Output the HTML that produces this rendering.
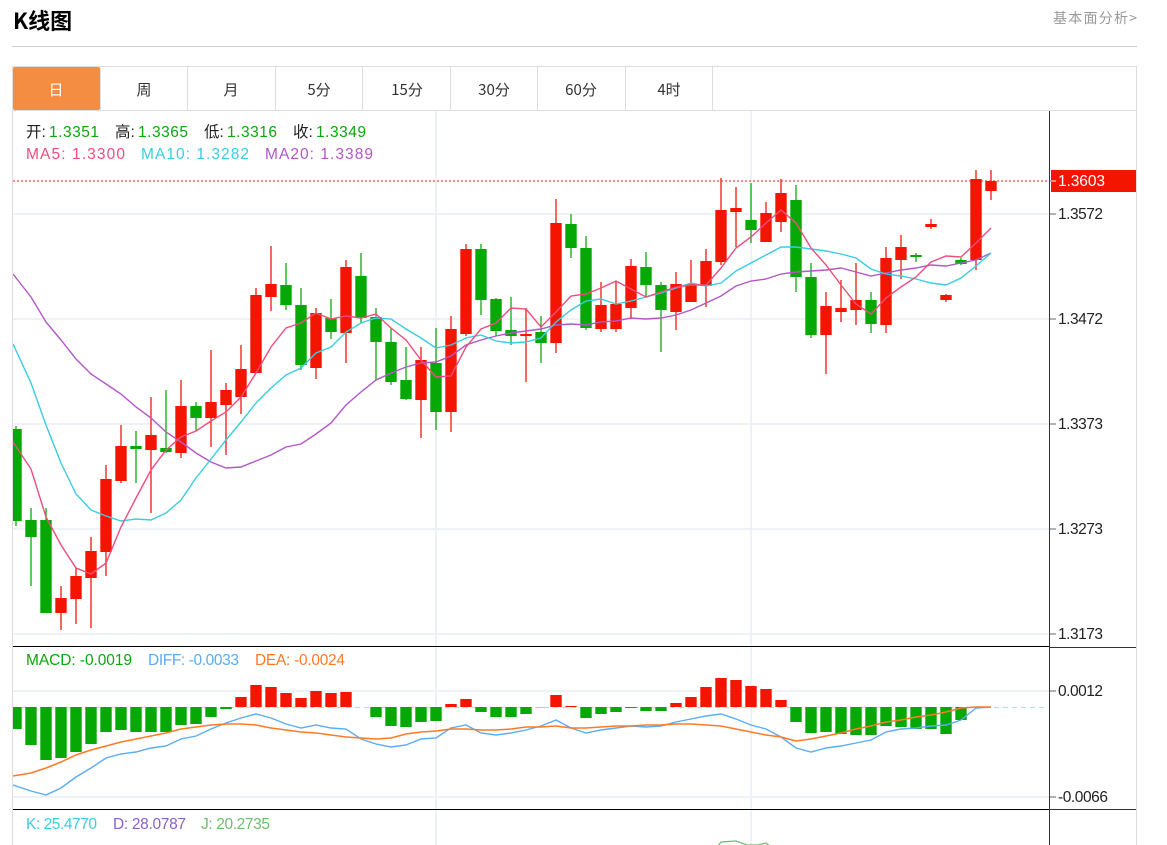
<!DOCTYPE html>
<html lang="zh"><head><meta charset="utf-8"><title>K线图</title>
<style>
html,body{margin:0;padding:0;background:#fff;overflow:hidden}
svg{display:block}
text{font-family:"Liberation Sans","Noto Sans CJK SC",sans-serif;font-size:15.5px;white-space:pre}
.cjk{font-family:"Noto Sans CJK SC",sans-serif}
.g{fill:#0aa80a}.k{fill:#222}
.p{fill:#ee4d7e}.c{fill:#39cde0}.m{fill:#b257c7}
.ax{fill:#222}
.tab{font-family:"Noto Sans CJK SC",sans-serif;font-size:15px;fill:#333;text-anchor:middle}
</style></head><body>
<svg width="1167" height="845" viewBox="0 0 1167 845" xmlns="http://www.w3.org/2000/svg">
<defs><clipPath id="cp"><rect x="13" y="111" width="1036" height="734"/></clipPath></defs>
<rect width="1167" height="845" fill="#fff"/>
<text x="13" y="29" class="cjk" style="font-size:22px;font-weight:700" fill="#000">K线图</text>
<text x="1053" y="23" class="cjk" style="font-size:14px" fill="#999" textLength="84">基本面分析&gt;</text>
<path d="M12 46.5H1137" stroke="#ccc"/>
<path d="M12.5 66V845M1136.5 66V845M12 66.5H1137M12 110.5H1137" stroke="#ddd" fill="none"/>
<path d="M100.5 67V110M187.5 67V110M275.5 67V110M362.5 67V110M450.5 67V110M537.5 67V110M625.5 67V110M712.5 67V110" stroke="#ddd"/>
<rect x="13" y="67" width="87" height="43" rx="2" fill="#f48c42"/>
<text x="56" y="95" class="tab" style="fill:#fff">日</text>
<text x="144" y="95" class="tab">周</text>
<text x="231" y="95" class="tab">月</text>
<text x="319" y="95" class="tab">5分</text>
<text x="407" y="95" class="tab">15分</text>
<text x="494" y="95" class="tab">30分</text>
<text x="581" y="95" class="tab">60分</text>
<text x="669" y="95" class="tab">4时</text>

<!-- grid -->
<g stroke="#e9eef3" stroke-width="1.5" fill="none">
<path d="M13 214H1049M13 319H1049M13 424H1049M13 529H1049M13 634H1049M13 691H1049M13 797H1049"/>
<path d="M436 111V845M751 111V845"/>
</g>
<path d="M13 181H1047" stroke="#f44" stroke-width="1.2" stroke-dasharray="2 2"/>
<path d="M13 707.5H1045" stroke="#b5dff5" stroke-width="1.3" stroke-dasharray="5 4"/>

<g clip-path="url(#cp)" fill="none">
<!-- wicks -->
<path stroke="#1fb01f" stroke-width="1.4" d="M16 426V526M31 508V586M46 508V613M136 431V483M166 390V453M196 402V431M286 263V310M301 288V370M331 299V339M361 253V323M376 308V380M391 328V385M406 347V400M436 328V430M481 244V315M496 298V336M511 297V345M541 316V363M571 214V258M586 236V330M646 252V297M661 282V352M751 183V243M796 185V292M811 263V338M871 292V333M916 253V262M961 258V265"/>
<path stroke="#f6291a" stroke-width="1.4" d="M61 586V630M76 568V624M91 537V628M106 465V576M121 425V483M151 397V513M181 380V458M211 350V447M226 383V455M241 345V414M256 288V373M271 246V311M316 308V379M346 260V363M421 347V438M451 316V432M466 244V336M526 308V382M556 199V353M601 282V332M616 281V332M631 259V319M676 272V330M691 260V302M706 249V307M721 178V265M736 187V247M766 202V242M781 179V232M826 292V374M841 280V322M856 263V325M886 247V333M901 235V279M931 219V229M946 294V302M976 170V270M991 170V200"/>
<!-- bodies -->
<path stroke="#06a806" stroke-width="11.4" d="M16 429V521M31 520V537M46 520V613M136 446V449M166 448V452M196 406V418M286 285V305M301 305V365M331 318V332M361 276V318M376 317V342M391 342V382M406 380V399M436 363V412M481 249V300M496 299V331M511 330V336M541 332V343M571 224V248M586 248V328M646 267V285M661 285V310M751 220V230M796 200V277M811 277V335M871 300V324M916 255V257M961 260V264"/>
<path stroke="#f41500" stroke-width="11.4" d="M61 598V613M76 576V599M91 551V578M106 479V552M121 446V481M151 435V450M181 406V453M211 402V418M226 390V405M241 369V397M256 295V373M271 284V297M316 313V368M346 267V333M421 360V400M451 329V412M466 249V334M526 334V336M556 223V343M601 305V329M616 304V329M631 266V308M676 284V312M691 284V302M706 261V286M721 210V262M736 208V212M766 213V242M781 193V222M826 306V335M841 308V312M856 300V310M886 258V325M901 247V260M931 224V227M946 295V300M976 179V260M991 181V191"/>
<!-- MA lines -->
<polyline stroke="#b257c7" stroke-width="1.4" points="13,274 31,297 46,322 61,340 76,359 91,374 106,384 121,394 136,407 151,418 166,432 181,442 196,453 211,462 226,468 241,467 256,461 271,455 286,447 301,444 316,434 331,423 346,405 361,392 376,380 391,373 406,367 421,363 436,362 451,356 466,345 481,340 496,336 511,333 526,331 541,329 556,325 571,324 586,325 601,322 616,321 631,318 646,319 661,318 676,315 691,310 706,303 721,296 736,286 751,281 766,279 781,274 796,272 811,271 826,270 841,268 856,272 871,276 886,273 901,270 916,268 931,265 946,266 961,263 976,260 991,253"/>
<polyline stroke="#39cde0" stroke-width="1.4" points="13,344 31,383 46,425 61,463 76,494 91,510 106,516 121,521 136,519 151,520 166,513 181,500 196,478 211,459 226,440 241,422 256,403 271,388 286,375 301,368 316,353 331,347 346,332 361,323 376,318 391,319 406,329 421,338 436,348 451,345 466,338 481,335 496,341 511,343 526,342 541,338 556,322 571,310 586,301 601,299 616,304 631,301 646,297 661,293 676,288 691,283 706,286 721,283 736,271 751,263 766,255 781,247 796,247 811,249 826,251 841,254 856,258 871,269 886,274 901,276 916,279 931,283 946,285 961,278 976,266 991,253"/>
<polyline stroke="#ee4d7e" stroke-width="1.4" points="13,442 31,469 46,517 61,545 76,568 91,574 106,563 121,527 136,498 151,470 166,450 181,437 196,431 211,421 226,412 241,397 256,373 271,347 286,328 301,323 316,313 331,319 346,316 361,318 376,314 391,328 406,340 421,360 436,377 451,376 466,347 481,329 496,323 511,308 526,309 541,327 556,312 571,296 586,294 601,288 616,281 631,289 646,297 661,292 676,287 691,285 706,285 721,268 736,248 751,237 766,223 781,210 796,223 811,248 826,265 841,285 856,304 871,314 886,298 901,287 916,277 931,262 946,256 961,257 976,243 991,228"/>
<!-- MACD bars -->
<path stroke="#06a806" stroke-width="11.4" d="M16 707V729M31 707V745M46 707V760M61 707V758M76 707V752M91 707V744M106 707V732M121 707V730M136 707V732M151 707V732M166 707V732M181 707V725M196 707V724M211 707V717M226 707V709M376 707V717M391 707V726M406 707V727M421 707V722M436 707V721M481 707V712M496 707V717M511 707V717M526 707V714M586 707V718M601 707V714M616 707V712M631 707V708M646 707V711M661 707V711M796 707V722M811 707V733M826 707V732M841 707V734M856 707V735M871 707V735M886 707V726M901 707V727M916 707V729M931 707V729M946 707V734M961 707V720"/>
<path stroke="#a8dca8" stroke-width="11.4" d="M541 707V708"/>
<path stroke="#f41500" stroke-width="11.4" d="M241 707V697M256 707V685M271 707V687M286 707V693M301 707V698M316 707V691M331 707V693M346 707V692M451 707V704M466 707V699M556 707V695M571 707V706M676 707V703M691 707V697M706 707V687M721 707V678M736 707V680M751 707V686M766 707V689M781 707V700"/>
<!-- DEA / DIFF -->
<polyline stroke="#5aacf5" stroke-width="1.4" points="13,785 31,791 46,795 61,788 76,777 91,768 106,758 121,754 136,752 151,748 166,746 181,739 196,736 211,729 226,723 241,718 256,714 271,718 286,724 301,728 316,725 331,728 346,729 361,739 376,744 391,747 406,745 421,739 436,738 451,728 466,725 481,733 496,735 511,733 526,730 541,726 556,720 571,728 586,733 601,730 616,728 631,726 646,727 661,726 676,722 691,719 706,716 721,714 736,719 751,725 766,729 781,737 796,748 811,752 826,748 841,746 856,743 871,740 886,732 901,729 916,728 931,726 946,725 961,720 976,708 991,707"/>
<polyline stroke="#ff7a26" stroke-width="1.5" points="13,776 31,773 46,768 61,762 76,755 91,750 106,746 121,742 136,739 151,736 166,733 181,729 196,727 211,725 226,724 241,724 256,725 271,728 286,730 301,732 316,733 331,735 346,737 361,738 376,739 391,738 406,734 421,732 436,731 451,729 466,729 481,730 496,730 511,729 526,727 541,727 556,726 571,728 586,728 601,727 616,726 631,726 646,725 661,725 676,724 691,724 706,725 721,726 736,729 751,732 766,735 781,737 796,741 811,739 826,736 841,733 856,729 871,726 886,722 901,720 916,717 931,715 946,712 961,708 976,707 991,707"/>
<polyline stroke="#6cbf6c" stroke-width="1.2" points="718,846 721,842 736,841 747,845 758,845 766,843 770,846"/>
</g>

<!-- axes -->
<path d="M1049.5 111V845" stroke="#333"/>
<path d="M13 646.5H1049M13 809.5H1049" stroke="#000"/>
<path d="M1049 647.5H1136M1049 809.5H1136" stroke="#333"/>
<path d="M1050 181H1056M1050 214H1056M1050 319H1056M1050 424H1056M1050 529H1056M1050 634H1056M1050 691H1056M1050 797H1056" stroke="#666"/>
<rect x="1051" y="170" width="85" height="22" fill="#f41500"/>
<path d="M1051 181H1056" stroke="#fff"/>
<text x="1058" y="186" fill="#fff" textLength="47">1.3603</text>
<text x="1058" y="219" class="ax" textLength="45">1.3572</text>
<text x="1058" y="324" class="ax" textLength="45">1.3472</text>
<text x="1058" y="429" class="ax" textLength="45">1.3373</text>
<text x="1058" y="534" class="ax" textLength="45">1.3273</text>
<text x="1058" y="639" class="ax" textLength="45">1.3173</text>
<text x="1058" y="696" class="ax" textLength="45">0.0012</text>
<text x="1058" y="802" class="ax" textLength="50">-0.0066</text>

<!-- legend -->
<text x="26" y="137" class="k">开:</text><text x="49" y="137" class="g" textLength="50">1.3351</text>
<text x="115" y="137" class="k">高:</text><text x="138" y="137" class="g" textLength="50">1.3365</text>
<text x="204" y="137" class="k">低:</text><text x="227" y="137" class="g" textLength="50">1.3316</text>
<text x="293" y="137" class="k">收:</text><text x="316" y="137" class="g" textLength="50">1.3349</text>
<text x="26" y="159" class="p" textLength="99">MA5: 1.3300</text>
<text x="141" y="159" class="c" textLength="108">MA10: 1.3282</text>
<text x="265" y="159" class="m" textLength="108">MA20: 1.3389</text>
<text x="26" y="665" class="g" textLength="106">MACD: -0.0019</text>
<text x="148" y="665" fill="#5aacf5" textLength="91">DIFF: -0.0033</text>
<text x="255" y="665" fill="#ff7a26" textLength="90">DEA: -0.0024</text>
<text x="26" y="829" class="c" textLength="71">K: 25.4770</text>
<text x="113" y="829" fill="#8a5fc8" textLength="73">D: 28.0787</text>
<text x="201" y="829" fill="#6cbf6c" textLength="69">J: 20.2735</text>
</svg>
</body></html>
